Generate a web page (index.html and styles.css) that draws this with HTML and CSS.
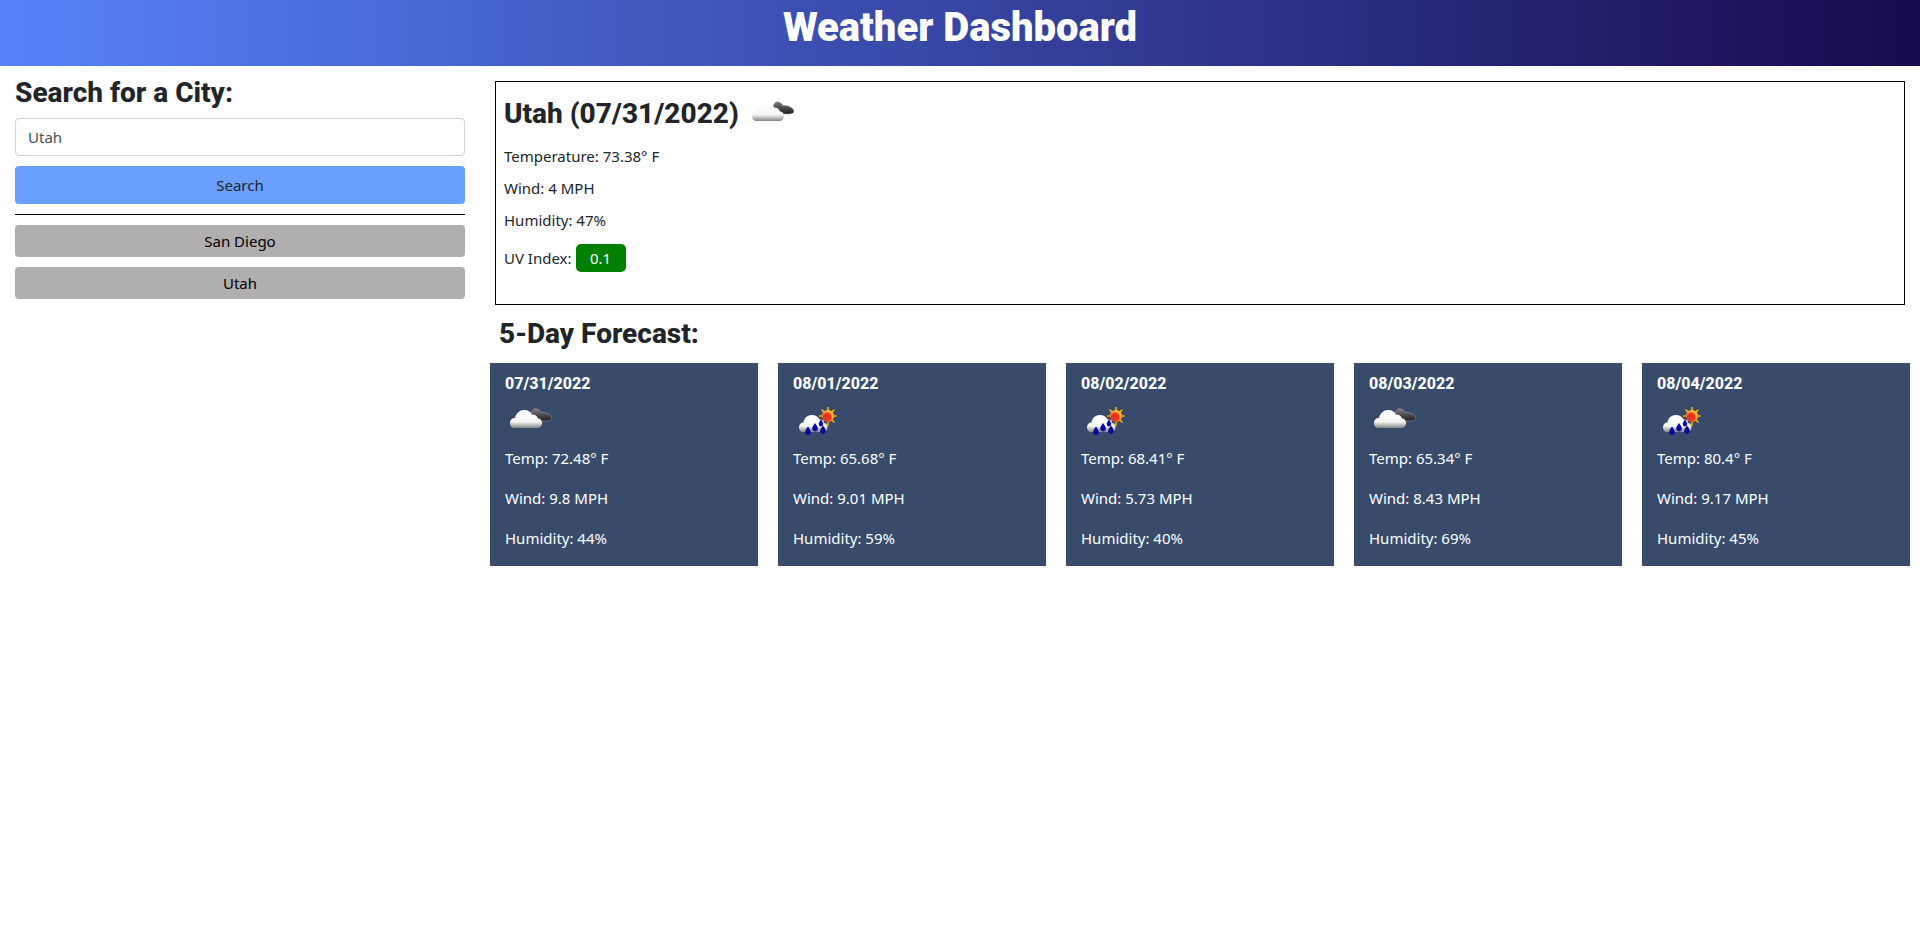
FILE: index.html
```html
<!DOCTYPE html>
<html lang="en">
<head>
<meta charset="utf-8">
<title>Weather Dashboard</title>
<link rel="stylesheet" href="styles.css">
</head>
<body>
<svg class="defs" width="0" height="0" aria-hidden="true">
  <defs>
    <linearGradient id="cloudWhite" x1="0" y1="0" x2="0" y2="1">
      <stop offset="0" stop-color="#ffffff"/>
      <stop offset="0.65" stop-color="#f6f6f6"/>
      <stop offset="1" stop-color="#858585"/>
    </linearGradient>
    <linearGradient id="cloudDark" x1="0" y1="0" x2="0" y2="1">
      <stop offset="0" stop-color="#7d7d7d"/>
      <stop offset="1" stop-color="#1f1f1f"/>
    </linearGradient>
    <radialGradient id="sun" cx="0.42" cy="0.6">
      <stop offset="0.6" stop-color="#ee2f22"/>
      <stop offset="1" stop-color="#fbc02d"/>
    </radialGradient>
    <symbol id="clouds" viewBox="0 0 44 28">
      <g transform="translate(0 1)">
        <path d="M21 5C22 2 24 0 27 1 29 1.500 30 3 31 4.500 35 4 41 6 42 10 42 12 40 13 37 13H28z" fill="url(#cloudDark)" stroke="#a8a8a8" stroke-width=".5"/>
        <path d="M4 20C1.500 20 0 17.500 0 15 0 12 2 10 5 10 6 5 10 2 14 2 18 2 21 4 22 7 24 6 27 7 28 10.500 30.500 10.500 32 12.500 32 15 32 17.500 30.500 20 28 20z" fill="url(#cloudWhite)"/>
      </g>
    </symbol>
    <symbol id="rain" viewBox="0 0 44 28">
      <g transform="translate(1 0)">
        <g stroke="#f7a21c" stroke-width="1.700">
          <path d="M29 0v5M29 14v5M20 9h5M33 9h5M22.600 2.600l3.500 3.500M32 12l3.500 3.500M35.400 2.600 32 6M26 12l-3.500 3.500"/>
        </g>
        <circle cx="29" cy="9" r="6" fill="url(#sun)"/>
        <path d="M3.500 25C1.500 25 0 23 0 20.500 0 17.500 1.500 15.500 4.500 15.500 5 11 8.500 8 13 8 16.500 8 19 9.500 20.500 12.500 22.500 12 24.500 13.500 25 16 27 16 28.500 18 28.500 20.500 28.500 23 27 25 25 25z" fill="url(#cloudWhite)"/>
        <g fill="#08089a">
          <path d="M9 19.500c1.800 2.700 2.800 4 2.800 5.400a2.800 2.800 0 0 1-5.600 0c0-1.400 1-2.700 2.800-5.400z"/>
          <path d="M16 16c1.800 2.700 2.800 4 2.800 5.400a2.800 2.800 0 0 1-5.600 0c0-1.400 1-2.700 2.800-5.400z"/>
          <path d="M22 12.500c1.500 2.300 2.300 3.400 2.300 4.600a2.300 2.300 0 0 1-4.600 0c0-1.200.8-2.300 2.300-4.600z"/>
          <path d="M24 18.500c1.800 2.700 2.800 4 2.800 5.400a2.800 2.800 0 0 1-5.600 0c0-1.400 1-2.700 2.800-5.400z"/>
        </g>
      </g>
    </symbol>
  </defs>
</svg>
<header class="banner"><h1>Weather Dashboard</h1></header>
<div class="layout">
  <aside class="sidebar">
    <h2 class="heading">Search for a City:</h2>
    <input class="city-input" type="text" value="Utah" aria-label="City">
    <button class="btn btn-search" type="button">Search</button>
    <hr class="rule">
    <button class="btn btn-history" type="button">San Diego</button>
    <button class="btn btn-history" type="button">Utah</button>
  </aside>
  <main class="content">
    <section class="today">
      <h2 class="today-title">Utah (07/31/2022) <svg class="today-icon"><use href="#clouds"/></svg></h2>
      <p>Temperature: 73.38° F</p>
      <p>Wind: 4 MPH</p>
      <p>Humidity: 47%</p>
      <p class="uv">UV Index: <span class="uv-badge">0.1</span></p>
    </section>
    <h2 class="heading forecast-title">5-Day Forecast:</h2>
    <div class="cards">
      <article class="card">
        <h3>07/31/2022</h3>
        <svg class="card-icon"><use href="#clouds"/></svg>
        <p>Temp: 72.48° F</p><p>Wind: 9.8 MPH</p><p>Humidity: 44%</p>
      </article>
      <article class="card">
        <h3>08/01/2022</h3>
        <svg class="card-icon"><use href="#rain"/></svg>
        <p>Temp: 65.68° F</p><p>Wind: 9.01 MPH</p><p>Humidity: 59%</p>
      </article>
      <article class="card">
        <h3>08/02/2022</h3>
        <svg class="card-icon"><use href="#rain"/></svg>
        <p>Temp: 68.41° F</p><p>Wind: 5.73 MPH</p><p>Humidity: 40%</p>
      </article>
      <article class="card">
        <h3>08/03/2022</h3>
        <svg class="card-icon"><use href="#clouds"/></svg>
        <p>Temp: 65.34° F</p><p>Wind: 8.43 MPH</p><p>Humidity: 69%</p>
      </article>
      <article class="card">
        <h3>08/04/2022</h3>
        <svg class="card-icon"><use href="#rain"/></svg>
        <p>Temp: 80.4° F</p><p>Wind: 9.17 MPH</p><p>Humidity: 45%</p>
      </article>
    </div>
  </main>
</div>
</body>
</html>
```
FILE: styles.css
```css
* { box-sizing: border-box; }
html, body { margin: 0; padding: 0; }
body {
  background: #fff;
  color: #212529;
  font-family: "Noto Sans", "Open Sans", sans-serif;
  font-size: 15px;
  line-height: 24px;
}
.defs { position: absolute; }
.banner {
  height: 66px;
  background: linear-gradient(to right, #5682fa, #170a4c);
  display: flex;
  justify-content: center;
}
.banner h1 {
  margin: 0;
  color: #fff;
  font: 900 40px/56px Roboto, sans-serif;
}
.layout { display: flex; align-items: flex-start; }
.sidebar {
  width: 480px;
  flex: none;
  padding: 10px 15px;
  display: flex;
  flex-direction: column;
}
.heading {
  margin: 0;
  font: 800 28px/34px Roboto, sans-serif;
  color: #212529;
}
.city-input {
  margin-top: 8px;
  height: 38px;
  padding: 6px 12px;
  border: 1px solid #ced4da;
  border-radius: 4px;
  font: inherit;
  color: #495057;
  background: #fff;
}
.btn {
  border: 0;
  border-radius: 4px;
  font: inherit;
  text-align: center;
  padding: 0;
}
.btn-search {
  margin-top: 10px;
  height: 38px;
  background: #699fff;
  color: #212529;
}
.rule {
  width: 100%;
  margin: 10px 0;
  border: 0;
  border-top: 1px solid #000;
}
.btn-history {
  height: 32px;
  background: #b0aeae;
  color: #000;
}
.btn-history + .btn-history { margin-top: 10px; }
.content {
  flex: 1;
  min-width: 0;
  padding: 15px 10px 0;
}
.today {
  margin: 0 5px;
  height: 224px;
  border: 1px solid #000;
  padding: 15px 8px 0;
}
.today-title {
  margin: 0 0 13px;
  display: flex;
  align-items: center;
  gap: 13px;
  font: 800 28px/34px Roboto, sans-serif;
}
.today-icon { width: 44px; height: 28px; }
.today p { margin: 0 0 8px; }
.today p.uv { margin-top: 12px; display: flex; align-items: center; gap: 4px; }
.uv-badge {
  display: inline-block;
  width: 50px;
  height: 28px;
  border-radius: 5px;
  background: #008000;
  color: #fff;
  text-align: center;
  line-height: 28px;
}
.forecast-title { margin: 12px 0 12px 9px; }
.cards {
  display: grid;
  grid-template-columns: repeat(5, 268px);
  gap: 20px;
}
.card {
  height: 203px;
  background: #384b6b;
  color: #fff;
  padding: 9px 15px 0;
}
.card h3 {
  margin: 0;
  font: 800 16px/24px Roboto, sans-serif;
}
.card-icon { display: block; width: 44px; height: 28px; margin: 11px 0 11px 5px; }
.card p { margin: 0 0 16.200px; }
```
